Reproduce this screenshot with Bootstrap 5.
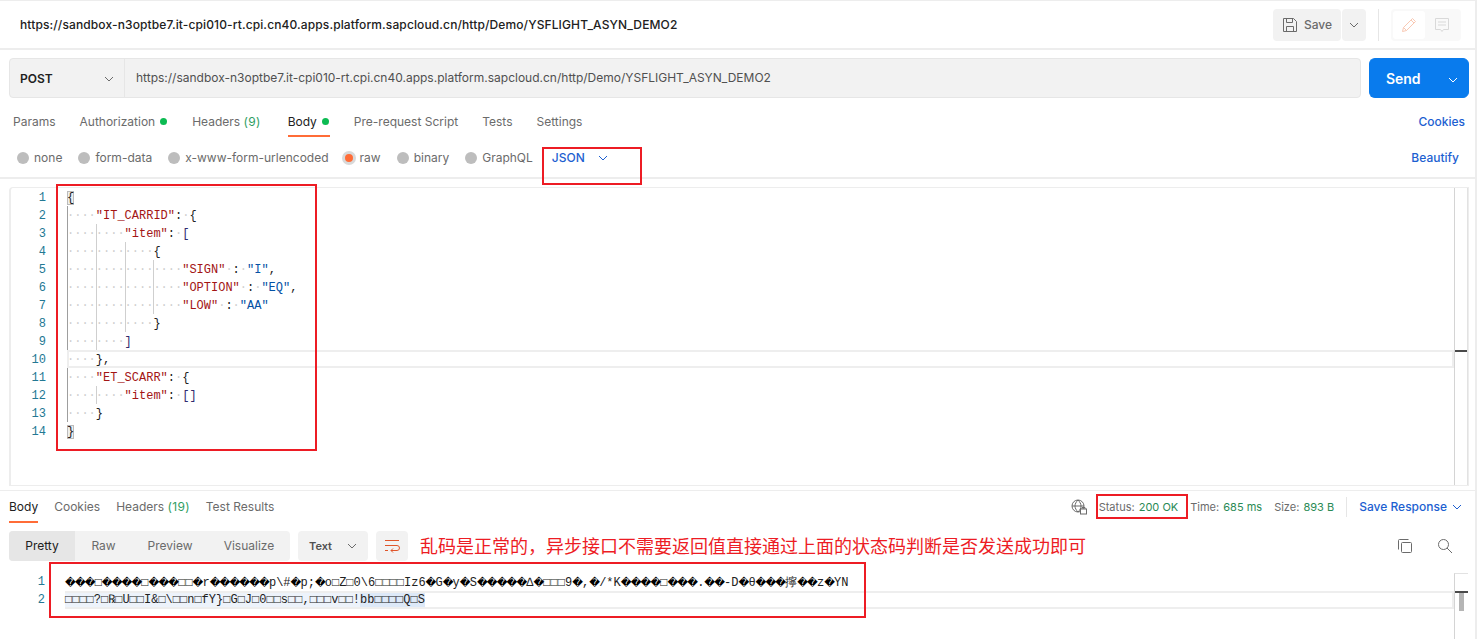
<!DOCTYPE html>
<html lang="en">
<head>
<meta charset="utf-8">
<title>Postman request</title>
<link href="https://cdn.jsdelivr.net/npm/bootstrap@5.3.0/dist/css/bootstrap.min.css" rel="stylesheet">
<style>
html,body{height:100%;overflow:hidden}
body{font-family:Inter,"Noto Sans",sans-serif;font-size:12px;color:#6b6b6b;background:#fff}
.app{width:1477px;height:639px;border-right:2px solid #ededed;border-top:1px solid #ededed;position:relative;overflow:hidden}
.topbar{height:49px;border-bottom:2px solid #ededed;padding:0 14px 0 20px}
.ttl{color:#212121;font-weight:500;font-size:12px;letter-spacing:.12px}
.svbtn{height:32px;background:#f2f2f2;border-radius:4px;color:#6b6b6b;font-weight:500}
.sv1{width:68px;gap:6px;margin-right:1px}
.sv2{width:24px}
.vdiv{width:1px;height:32px;background:#e6e6e6;margin:0 12px}
.pnl{width:70px;height:32px;background:#f9f9f9;border-radius:4px;padding:2px}
.pnl-a{width:32px;height:28px;background:#fff;border-radius:3px}
.pnl-b{flex:1}
.urlrow{padding:8px 6px 0 9px;gap:8px}
.urlbox{height:40px;background:#f2f2f2;border:1px solid #e6e6e6;border-radius:4px;flex:1}
.mth{width:115px;border-right:1px solid #e6e6e6;padding:2px 10px 0;color:#212121;font-weight:600}
.urltx{padding-left:11px;color:#505050}
.sendgrp{width:100px;height:40px}
.sendgrp .btn{background:#097bed;border-color:#097bed;color:#fff;font-size:14px;font-weight:600;padding:0}
.sendgrp .sa{width:68px;border-right-color:#0a6fd4}
.sendgrp .sb{width:32px}
.tabrow{height:39px;padding:8px 10px 0 13px;gap:24px}
.tb{position:relative;height:100%;display:flex;align-items:center;gap:5px;color:#6b6b6b;white-space:nowrap}
.tb.on{color:#212121}
.tb.on:after{content:"";position:absolute;left:0;right:0;bottom:0;height:2px;background:#ff6c37}
.tabrow .tb.on{padding-right:1px}
.tb.hd{padding-left:1px;padding-right:3px}
.gdot{width:7px;height:7px;border-radius:50%;background:#0cbb52}
.cnt{color:#2f9e62;letter-spacing:.3px}
.lnkb{color:#1d5fd1;font-weight:500;font-size:12px}
.radrow{height:42px;padding:2px 16px 0 17px;border-bottom:2px solid #ededed}
.rd{display:flex;align-items:center;gap:5px;white-space:nowrap}
.rd.g16{margin-left:16px}
.rd.g14{margin-left:14px}
.ci{width:12px;height:12px;border-radius:50%;background:#bdbdbd;display:block}
.ci.sel{background:#ff6c37;border:2px solid #d9d9d9;box-shadow:0 0 0 1px #d9d9d9}
.jsn{margin-left:19px}
.jch{margin-left:13px}
.ed{margin:8px 6px 0 9px;height:299px;border:1px solid #ededed;border-radius:4px 0 0 0;border-left:2px solid #ededed}
.ed .cl{line-height:20px}
.code{font-family:"Liberation Mono","DejaVu Sans Mono",monospace;font-size:12px;line-height:18px;color:#212121}
.cl{display:flex;height:18px;white-space:pre}
.ln{width:35px;text-align:right;color:#237893;flex:none}
.cc{flex:1;margin-left:21px}
.ind{display:inline-block;width:28.8px;height:18px;box-shadow:inset 1px 0 0 #cfcfcf;vertical-align:top}
.ind.fst{box-shadow:inset 1px 0 0 #9e9e9e}
.ind.nog{box-shadow:none}
.w{color:#cfcfcf}
.k{color:#a31515}
.s{color:#0451a5}
.p{color:#2e2a6e}
.br{background:#eee;box-shadow:0 0 0 1px #bbb inset}
.curl{box-shadow:inset 0 0 0 2px #eee}
.sbar{width:14px;flex:none;border-left:1px solid #d4d4d4;border-right:1px solid #e2e2e2}
.mk1{height:2px;background:#4a4a4a;margin-top:162px}
.restop{margin-top:4px;height:33px;border-top:1px solid #ededed;padding:0 13px 0 9px}
.rtabs{gap:16px;height:100%}
.met{gap:12px;font-size:11px;color:#6b6b6b;white-space:nowrap}
.ok{color:#2a8a55;margin-left:1px}
.mdiv{width:1px;height:20px;background:#e6e6e6}
.sch{margin-left:-7px}
.tools{padding:8px 22px 0 9px;height:50px}
.seg{width:281px;height:30px;background:#f2f2f2;border-radius:4px;overflow:hidden}
.seg span{display:flex;align-items:center;justify-content:center;height:100%;color:#6b6b6b}
.seg .act{background:#e6e6e6;color:#212121}
.s1{width:66px}.s2{width:57px}.s3{width:76px}.s4{width:82px}
.fmt{width:70px;height:30px;background:#f2f2f2;border-radius:4px;margin-left:8px;color:#505050;font-size:11px;font-weight:600;padding:0 11px;justify-content:space-between}
.wrp{width:32px;height:30px;background:#f2f2f2;border-radius:4px;margin-left:8px}
.note{font-family:"Noto Sans CJK SC",sans-serif;font-size:18px;color:#ed1c24;margin-left:12px;line-height:28px;white-space:nowrap}
.ticons{height:30px}
.rs{height:66px;margin-left:9px;margin-right:0}
.rs .ln{width:36px}
.rs .cc{margin-left:20px}
.rp{font-family:"DejaVu Sans",sans-serif;font-size:10.5px;color:#000;letter-spacing:-.89px}
.sl{background:#edf3fb}
.sl2{background:#dde9f8}
.sb2{width:14px;flex:none;margin-right:7px;border-left:1px solid #d4d4d4;border-top:1px solid #e2e2e2}
.mk2{height:2px;background:#4a4a4a;margin-top:17px}
.th{width:5px;height:18px;background:#b5b5b5;margin-left:4px}
.rbox{position:absolute;border:2px solid #ed1c24;pointer-events:none}
.rb1{left:542px;top:146px;width:100px;height:38px}
.rb2{left:56px;top:183px;width:261px;height:267px}
.rb3{left:1096px;top:493px;width:92px;height:25px}
.rb4{left:49px;top:561px;width:817px;height:56px}
</style>
</head>
<body>
<div class="app">
  <header class="topbar d-flex align-items-center">
    <div class="ttl flex-grow-1">https://sandbox-n3optbe7.it-cpi010-rt.cpi.cn40.apps.platform.sapcloud.cn/http/Demo/YSFLIGHT_ASYN_DEMO2</div>
    <div class="svbtn sv1 d-flex align-items-center justify-content-center">
      <svg width="16" height="16" viewBox="0 0 16 16" fill="none" stroke="#6b6b6b"><path d="M1.500 1.500h10l3 3v10h-13z"/><path d="M4.500 1.500v4h6v-4M4.500 14.500v-5h7v5"/></svg><span>Save</span>
    </div>
    <div class="svbtn sv2 d-flex align-items-center justify-content-center">
      <svg width="10" height="6" viewBox="0 0 10 6" fill="none" stroke="#6b6b6b"><path d="M1 1l4 4 4-4"/></svg>
    </div>
    <div class="vdiv"></div>
    <div class="pnl d-flex">
      <div class="pnl-a d-flex align-items-center justify-content-center">
        <svg width="16" height="16" viewBox="0 0 16 16" fill="none" stroke="#f9c9b4"><path d="M1.500 14.500l1-4L11.500 1.500l3 3-9 9zM2.500 10.500l3 3M10 3l3 3"/></svg>
      </div>
      <div class="pnl-b d-flex align-items-center justify-content-center">
        <svg width="16" height="16" viewBox="0 0 16 16" fill="none" stroke="#d9d9d9"><path d="M1.500 1.500h13v11h-5l-1.500 2-1.500-2h-5zM4 5h8M4 8h8"/></svg>
      </div>
    </div>
  </header>

  <div class="urlrow d-flex">
    <div class="urlbox d-flex align-items-center">
      <div class="mth h-100 d-flex align-items-center justify-content-between">
        <span>POST</span>
        <svg width="10" height="6" viewBox="0 0 10 6" fill="none" stroke="#6b6b6b"><path d="M1 1l4 4 4-4"/></svg>
      </div>
      <div class="urltx">https://sandbox-n3optbe7.it-cpi010-rt.cpi.cn40.apps.platform.sapcloud.cn/http/Demo/YSFLIGHT_ASYN_DEMO2</div>
    </div>
    <div class="btn-group sendgrp">
      <button type="button" class="btn btn-primary sa">Send</button>
      <button type="button" class="btn btn-primary sb"><svg width="10" height="6" viewBox="0 0 10 6" fill="none" stroke="#fff"><path d="M1 1l4 4 4-4"/></svg></button>
    </div>
  </div>

  <div class="tabrow d-flex align-items-center">
    <div class="tb">Params</div>
    <div class="tb">Authorization <i class="gdot"></i></div>
    <div class="tb hd"><span>Headers <span class="cnt">(9)</span></span></div>
    <div class="tb on">Body <i class="gdot"></i></div>
    <div class="tb">Pre-request Script</div>
    <div class="tb">Tests</div>
    <div class="tb">Settings</div>
    <div class="lnkb ms-auto">Cookies</div>
  </div>

  <div class="radrow d-flex align-items-center">
    <div class="rd"><i class="ci"></i>none</div>
    <div class="rd g16"><i class="ci"></i>form-data</div>
    <div class="rd g16"><i class="ci"></i>x-www-form-urlencoded</div>
    <div class="rd g14"><i class="ci sel"></i>raw</div>
    <div class="rd g16"><i class="ci"></i>binary</div>
    <div class="rd g16"><i class="ci"></i>GraphQL</div>
    <div class="lnkb d-flex align-items-center jsn">JSON<svg class="jch" width="10" height="6" viewBox="0 0 10 6" fill="none" stroke="#1d5fd1"><path d="M1 1l4 4 4-4"/></svg></div>
    <div class="lnkb ms-auto">Beautify</div>
  </div>

  <section class="ed d-flex">
    <div class="code flex-grow-1">
      <div class="cl"><span class="ln">1</span><span class="cc"><span class="br">{</span></span></div>
      <div class="cl"><span class="ln">2</span><span class="cc"><span class="ind fst w">····</span><span class="k">"IT_CARRID"</span>:<span class="w">·</span>{</span></div>
      <div class="cl"><span class="ln">3</span><span class="cc"><span class="ind fst w">····</span><span class="ind w">····</span><span class="k">"item"</span>:<span class="w">·</span><span class="p">[</span></span></div>
      <div class="cl"><span class="ln">4</span><span class="cc"><span class="ind fst w">····</span><span class="ind w">····</span><span class="ind w">····</span>{</span></div>
      <div class="cl"><span class="ln">5</span><span class="cc"><span class="ind fst w">····</span><span class="ind w">····</span><span class="ind w">····</span><span class="ind w">····</span><span class="k">"SIGN"</span><span class="w">·</span>:<span class="w">·</span><span class="s">"I"</span>,</span></div>
      <div class="cl"><span class="ln">6</span><span class="cc"><span class="ind fst w">····</span><span class="ind w">····</span><span class="ind w">····</span><span class="ind w">····</span><span class="k">"OPTION"</span><span class="w">·</span>:<span class="w">·</span><span class="s">"EQ"</span>,</span></div>
      <div class="cl"><span class="ln">7</span><span class="cc"><span class="ind fst w">····</span><span class="ind w">····</span><span class="ind w">····</span><span class="ind w">····</span><span class="k">"LOW"</span><span class="w">·</span>:<span class="w">·</span><span class="s">"AA"</span></span></div>
      <div class="cl"><span class="ln">8</span><span class="cc"><span class="ind fst w">····</span><span class="ind w">····</span><span class="ind w">····</span>}</span></div>
      <div class="cl"><span class="ln">9</span><span class="cc"><span class="ind fst w">····</span><span class="ind w">····</span><span class="p">]</span></span></div>
      <div class="cl"><span class="ln">10</span><span class="cc curl"><span class="ind nog w">····</span>},</span></div>
      <div class="cl"><span class="ln">11</span><span class="cc"><span class="ind fst w">····</span><span class="k">"ET_SCARR"</span>:<span class="w">·</span>{</span></div>
      <div class="cl"><span class="ln">12</span><span class="cc"><span class="ind fst w">····</span><span class="ind w">····</span><span class="k">"item"</span>:<span class="w">·</span><span class="p">[]</span></span></div>
      <div class="cl"><span class="ln">13</span><span class="cc"><span class="ind fst w">····</span>}</span></div>
      <div class="cl"><span class="ln">14</span><span class="cc"><span class="br">}</span></span></div>
    </div>
    <div class="sbar"><div class="mk1"></div></div>
  </section>

  <div class="restop d-flex align-items-center">
    <div class="rtabs d-flex align-items-center">
      <div class="tb on">Body</div>
      <div class="tb">Cookies</div>
      <div class="tb"><span>Headers <span class="cnt">(19)</span></span></div>
      <div class="tb">Test Results</div>
    </div>
    <div class="met d-flex align-items-center ms-auto">
      <svg width="16" height="16" viewBox="0 0 16 16" fill="none" stroke="#6b6b6b"><circle cx="7" cy="7" r="6"/><path d="M1 7h12M7 1c-4 4-4 8 0 12M7 1c4 4 4 8 0 12"/><rect x="9.500" y="10" width="6" height="5" fill="#fff"/><path d="M11 10V8.500h3V10"/></svg>
      <span>Status: <span class="ok">200 OK</span></span>
      <span>Time: <span class="ok">685 ms</span></span>
      <span>Size: <span class="ok">893 B</span></span>
      <i class="mdiv"></i>
      <span class="lnkb">Save Response</span>
      <svg class="sch" width="10" height="6" viewBox="0 0 10 6" fill="none" stroke="#1d5fd1"><path d="M1 1l4 4 4-4"/></svg>
    </div>
  </div>

  <div class="tools d-flex align-items-start">
    <div class="seg d-flex">
      <span class="act s1">Pretty</span>
      <span class="s2">Raw</span>
      <span class="s3">Preview</span>
      <span class="s4">Visualize</span>
    </div>
    <div class="fmt d-flex align-items-center"><span>Text</span><svg width="10" height="6" viewBox="0 0 10 6" fill="none" stroke="#6b6b6b"><path d="M1 1l4 4 4-4"/></svg></div>
    <div class="wrp d-flex align-items-center justify-content-center">
      <svg width="16" height="14" viewBox="0 0 16 14" fill="none" stroke="#e0552a"><path d="M1 1.500h14M1 6.500h12a2 2 0 0 1 0 5H7M9 9.500l-2 2 2 2M1 11.500h3"/></svg>
    </div>
    <div class="note">乱码是正常的，异步接口不需要返回值直接通过上面的状态码判断是否发送成功即可</div>
    <div class="ticons d-flex align-items-center ms-auto gap-4">
      <svg width="16" height="16" viewBox="0 0 16 16" fill="none" stroke="#6b6b6b"><rect x="4.500" y="4.500" width="10" height="10" rx="1"/><path d="M11.500 1.500h-9a1 1 0 0 0-1 1v9"/></svg>
      <svg width="16" height="16" viewBox="0 0 16 16" fill="none" stroke="#6b6b6b"><circle cx="6.500" cy="6.500" r="5"/><path d="M10 10l5 5"/></svg>
    </div>
  </div>

  <section class="rs d-flex">
    <div class="code flex-grow-1">
      <div class="cl"><span class="ln">1</span><span class="cc"><span class="rp">���</span>□<span class="rp">����</span>□<span class="rp">���</span>□□<span class="rp">�</span>r<span class="rp">������</span>p\#<span class="rp">�</span>p;<span class="rp">�</span>o□Z□0\6□□□□Iz6<span class="rp">�</span>G<span class="rp">�</span>y<span class="rp">�</span>S<span class="rp">�����</span>∆<span class="rp">�</span>□□□9<span class="rp">�</span>,<span class="rp">�</span>/*K<span class="rp">����</span>□<span class="rp">���</span>.<span class="rp">��</span>-D<span class="rp">�</span>θ<span class="rp">���</span>擰<span class="rp">��</span>z<span class="rp">�</span>YN</span></div>
      <div class="cl"><span class="ln">2</span><span class="cc curl"><span class="sl">□□□□?□℞□U□□I&amp;□\□□n□fY}□G□J□0□□s□□,□□□v□□!</span><span class="sl2">bb□□□□Q□S</span></span></div>
    </div>
    <div class="sb2"><div class="mk2"></div><div class="th"></div></div>
  </section>

  <div class="rbox rb1"></div>
  <div class="rbox rb2"></div>
  <div class="rbox rb3"></div>
  <div class="rbox rb4"></div>
</div>
</body>
</html>
